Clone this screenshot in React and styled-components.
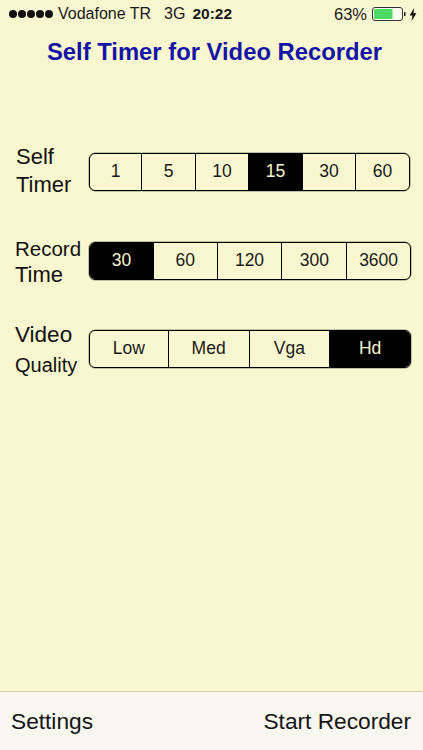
import React from 'react';
import styled, { createGlobalStyle } from 'styled-components';

const GlobalStyle = createGlobalStyle`
  html, body {
    margin: 0;
    padding: 0;
    background: #f9f7cf;
  }
  body {
    font-family: "Liberation Sans", Arial, sans-serif;
    color: #111;
  }
`;

const Page = styled.div`
  width: 423px;
  height: 750px;
  display: flex;
  flex-direction: column;
  overflow: hidden;
  background: #f9f7cf;
`;

const StatusBar = styled.div`
  height: 28px;
  padding: 0 6px 0 9px;
  display: flex;
  align-items: center;
  justify-content: space-between;
  font-size: 16px;
  color: #1a1a1a;
`;

const StatusGroup = styled.div`
  display: flex;
  align-items: center;
`;

const Signal = styled.div`
  display: flex;
  gap: 1px;
  margin-right: 5px;
`;

const Dot = styled.span`
  width: 8px;
  height: 8px;
  border-radius: 50%;
  background: #111;
`;

const Carrier = styled.span`
  margin-right: 13px;
`;

const Network = styled.span`
  margin-right: 7px;
`;

const Clock = styled.span`
  font-weight: 700;
  font-size: 15.5px;
`;

const Percent = styled.span`
  margin-right: 5px;
  font-size: 16.5px;
`;

const Title = styled.h1`
  margin: 9px 0 0;
  padding-left: 6px;
  height: 30px;
  line-height: 30px;
  text-align: center;
  font-size: 23.8px;
  font-weight: 700;
  color: #1414a6;
`;

const Form = styled.div`
  flex: 1;
  padding: 86px 12px 0 15px;
  display: flex;
  flex-direction: column;
`;

const Row = styled.div`
  height: 38px;
  display: flex;
  align-items: center;
  margin-bottom: ${props => props.$gap}px;
  margin-right: ${props => props.$right || 0}px;
`;

const Label = styled.div`
  width: 74px;
  box-sizing: border-box;
  flex-shrink: 0;
  display: flex;
  flex-direction: column;
  gap: ${props => props.$gap}px;
  padding-left: ${props => props.$inset || 0}px;
  margin-top: ${props => props.$top || 0}px;
  margin-bottom: ${props => props.$bottom || 0}px;
`;

const LabelLine = styled.span`
  font-size: ${props => props.$size || 22}px;
  line-height: 26px;
  white-space: nowrap;
`;

const Segments = styled.div`
  flex: 1;
  height: 38px;
  display: flex;
  box-sizing: border-box;
  border: 1px solid #000;
  border-radius: 6px;
  overflow: hidden;
  box-shadow: 0 0 0 0.5px rgba(0, 0, 0, 0.45);
`;

const Segment = styled.div`
  flex: ${props => props.$grow} 1 0;
  box-sizing: border-box;
  padding-bottom: 2px;
  display: flex;
  align-items: center;
  justify-content: center;
  font-size: 17.5px;
  color: ${props => props.$active ? '#f9f7cf' : '#1a1a1a'};
  background: ${props => props.$active ? '#000' : 'transparent'};
  border-left: ${props => props.$first ? 'none' : '1px solid #000'};
`;

const Toolbar = styled.div`
  height: 58px;
  padding: 0 12px 0 11px;
  display: flex;
  align-items: center;
  justify-content: space-between;
  background: #f8f7f0;
  border-top: 1px solid #cfcda6;
  font-size: 22.7px;
  color: #141414;
`;

const Battery = () => (
  <svg width="36" height="14" viewBox="0 0 36 14">
    <rect x="0.5" y="0.5" width="30" height="13" rx="2.5" fill="#fbfbf0" stroke="#333" />
    <rect x="2" y="2" width="18.5" height="10" rx="1" fill="#4cd964" />
    <rect x="32" y="5" width="1.5" height="4" fill="#222" />
  </svg>
);

const Bolt = () => (
  <svg width="8" height="13" viewBox="0 0 8 13" style={{ marginLeft: 1 }}>
    <path d="M5.2 0 L0.6 7.4 H3.4 L2.6 13 L7.4 5.2 H4.5 Z" fill="#111" />
  </svg>
);

const rows = [
  { lines: [{ text: 'Self' }, { text: 'Timer' }], options: ['1', '5', '10', '15', '30', '60'], widths: [52, 54, 53, 54, 53, 54], selected: '15', inset: 1, lineGap: 2, gap: 51, right: 1, bottom: 2 },
  { lines: [{ text: 'Record', size: 20.5 }, { text: 'Time' }], options: ['30', '60', '120', '300', '3600'], widths: [64, 64, 65, 65, 64], selected: '30', inset: 0, lineGap: -3, gap: 50, top: 2 },
  { lines: [{ text: 'Video', size: 22.5 }, { text: 'Quality', size: 20 }], options: ['Low', 'Med', 'Vga', 'Hd'], widths: [79, 81, 81, 81], selected: 'Hd', inset: 0, lineGap: 4, gap: 0, top: 2 },
];

const App = () => (
  <Page>
    <GlobalStyle />
    <StatusBar>
      <StatusGroup>
        <Signal>
          {[0, 1, 2, 3, 4].map(i => <Dot key={i} />)}
        </Signal>
        <Carrier>Vodafone TR</Carrier>
        <Network>3G</Network>
        <Clock>20:22</Clock>
      </StatusGroup>
      <StatusGroup>
        <Percent>63%</Percent>
        <Battery />
        <Bolt />
      </StatusGroup>
    </StatusBar>
    <Title>Self Timer for Video Recorder</Title>
    <Form>
      {rows.map(row => (
        <Row key={row.lines[0].text} $gap={row.gap} $right={row.right}>
          <Label $gap={row.lineGap} $inset={row.inset} $top={row.top} $bottom={row.bottom}>
            {row.lines.map(line => (
              <LabelLine key={line.text} $size={line.size}>{line.text}</LabelLine>
            ))}
          </Label>
          <Segments>
            {row.options.map((opt, i) => (
              <Segment key={opt} $grow={row.widths[i]} $first={i === 0} $active={opt === row.selected}>{opt}</Segment>
            ))}
          </Segments>
        </Row>
      ))}
    </Form>
    <Toolbar>
      <span>Settings</span>
      <span>Start Recorder</span>
    </Toolbar>
  </Page>
);

export default App;
